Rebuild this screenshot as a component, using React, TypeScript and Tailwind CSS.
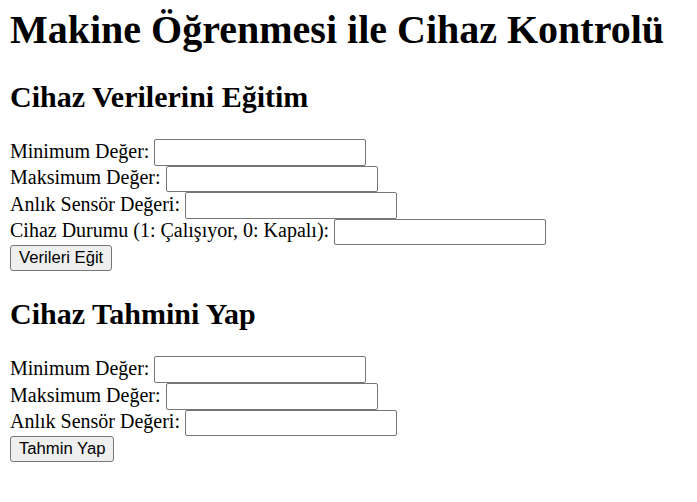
import React from "react";

const serif = "font-['Liberation_Serif','Times_New_Roman',serif]";
const sans = "font-['Liberation_Sans',Arial,sans-serif]";

function Field({ label }: { label: string }) {
  return (
    <div className="flex h-[26.6px] items-start">
      <label className="pt-[0.5px] leading-[23px] whitespace-nowrap">{label}</label>
      <input
        type="text"
        className={`ml-[5px] h-[26.5px] w-[212px] rounded-[2px] border border-[#767676] bg-white px-[2.5px] text-[16.67px] outline-none ${sans}`}
      />
    </div>
  );
}

function SubmitButton({ children }: { children: React.ReactNode }) {
  return (
    <div className="flex h-[26.6px] items-start">
      <button
        type="button"
        className={`flex h-[26px] items-center rounded-[3px] border border-[#767676] bg-[#efefef] px-[8px] text-[16.67px] leading-none text-black ${sans}`}
      >
        {children}
      </button>
    </div>
  );
}

export default function App() {
  return (
    <div className={`min-h-[502px] bg-white px-[10px] pt-[6.5px] text-[20px] text-black ${serif}`}>
      <h1 className="mb-[27px] text-[40px] font-bold leading-[46px] whitespace-nowrap">
        Makine Öğrenmesi ile Cihaz Kontrolü
      </h1>

      <section>
        <h2 className="mb-[25px] text-[30px] font-bold leading-[34.5px]">Cihaz Verilerini Eğitim</h2>
        <Field label="Minimum Değer:" />
        <Field label="Maksimum Değer:" />
        <Field label="Anlık Sensör Değeri:" />
        <Field label="Cihaz Durumu (1: Çalışıyor, 0: Kapalı):" />
        <SubmitButton>Verileri Eğit</SubmitButton>
      </section>

      <section className="mt-[25px]">
        <h2 className="mb-[25px] text-[30px] font-bold leading-[34.5px]">Cihaz Tahmini Yap</h2>
        <Field label="Minimum Değer:" />
        <Field label="Maksimum Değer:" />
        <Field label="Anlık Sensör Değeri:" />
        <SubmitButton>Tahmin Yap</SubmitButton>
      </section>
    </div>
  );
}
